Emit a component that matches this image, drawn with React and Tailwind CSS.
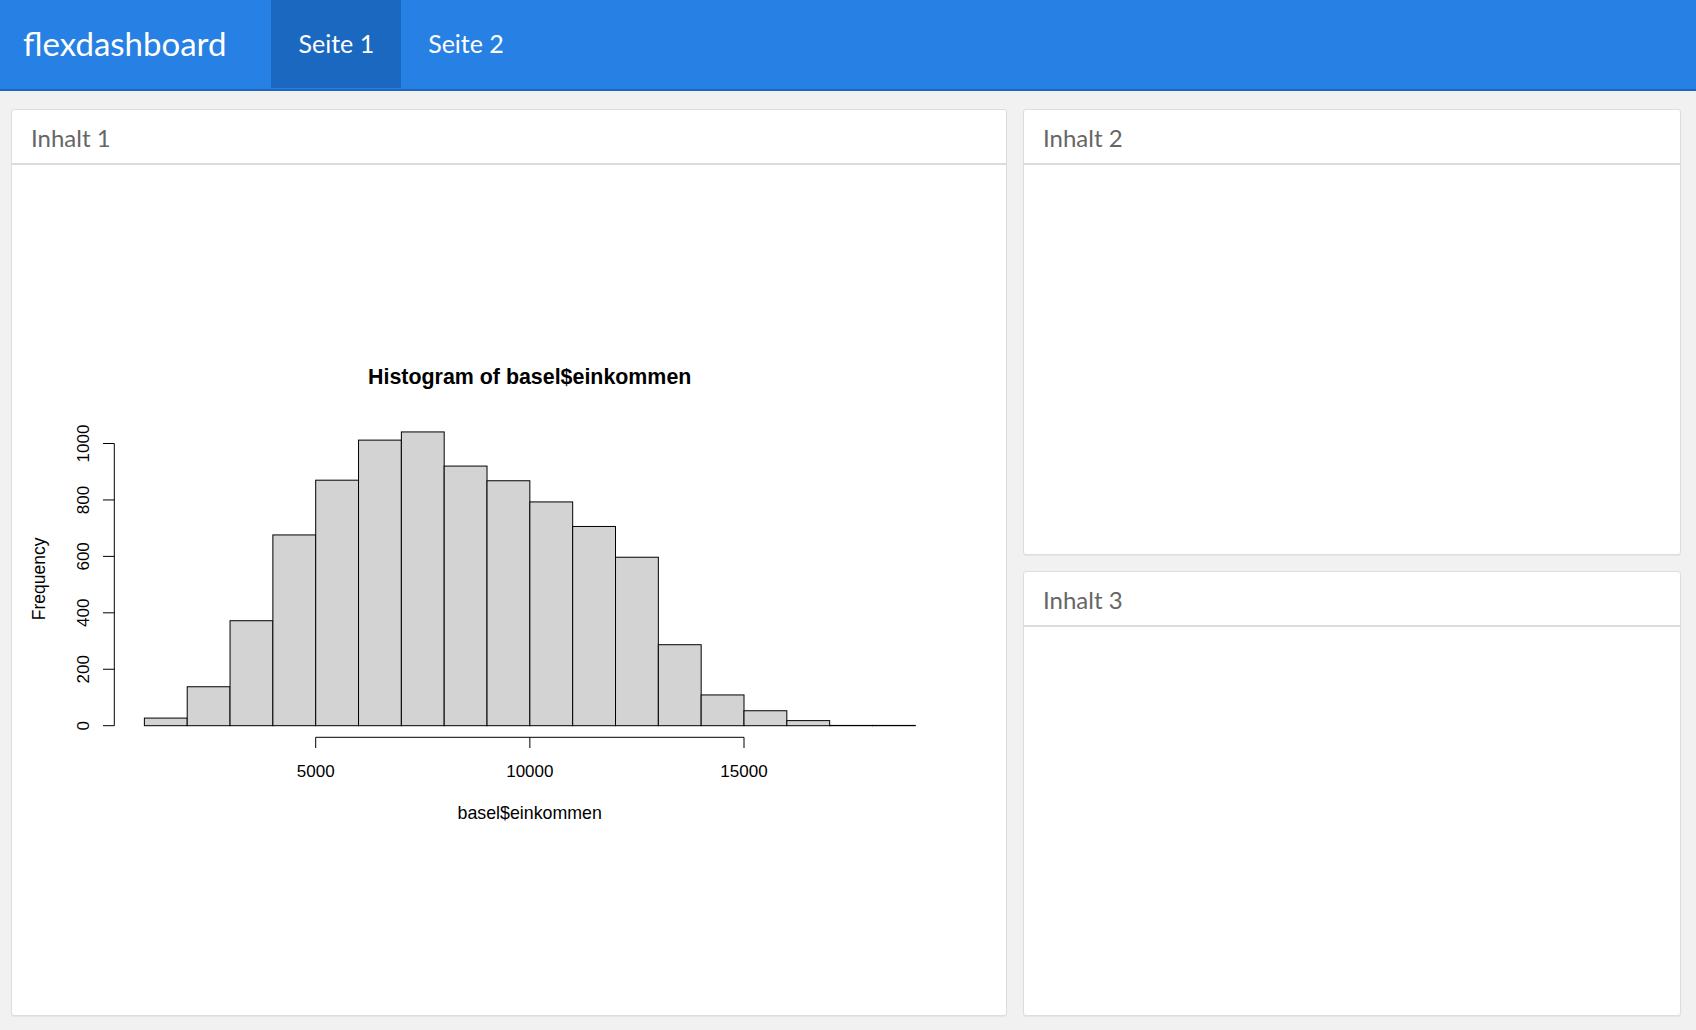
import React from "react";

const counts = [27, 138, 372, 676, 870, 1012, 1041, 920, 868, 793, 706, 597, 287, 109, 53, 18, 1, 1];

// plot coordinates in page pixels
const X = (v) => 101.55 + v * 0.04283;
const Y = (f) => 726.7 - f * 0.2822;

function Histogram() {
  const yTicks = [0, 200, 400, 600, 800, 1000];
  const xTicks = [5000, 10000, 15000];
  return (
    <svg width="994" height="849" className="block" style={{ fontFamily: '"Liberation Sans", Arial, sans-serif' }}>
      <g transform="translate(-12,-166)">
        <text x="529.7" y="385.4" textAnchor="middle" fontSize="21.4" fontWeight="bold" fill="#000">
          Histogram of basel$einkommen
        </text>

        {counts.map((c, i) => {
          const x0 = X(1000 + i * 1000);
          const x1 = X(2000 + i * 1000);
          return (
            <rect
              key={i}
              x={x0}
              y={Y(c)}
              width={x1 - x0}
              height={Y(0) - Y(c)}
              fill="#d3d3d3"
              stroke="#000"
              strokeWidth="1"
            />
          );
        })}

        {/* y axis */}
        <line x1="114.3" y1={Y(0)} x2="114.3" y2={Y(1000)} stroke="#000" strokeWidth="1" />
        {yTicks.map((t) => (
          <g key={t}>
            <line x1="103" y1={Y(t)} x2="114.3" y2={Y(t)} stroke="#000" strokeWidth="1" />
            <text
              transform={`translate(89.3,${Y(t)}) rotate(-90)`}
              textAnchor="middle"
              fontSize="17"
              fill="#000"
            >
              {t}
            </text>
          </g>
        ))}
        <text transform="translate(45,579.8) rotate(-90)" textAnchor="middle" fontSize="17.5" fill="#000">
          Frequency
        </text>

        {/* x axis */}
        <line x1={X(5000)} y1="738.3" x2={X(15000)} y2="738.3" stroke="#000" strokeWidth="1" />
        {xTicks.map((t) => (
          <g key={t}>
            <line x1={X(t)} y1="738.3" x2={X(t)} y2="749" stroke="#000" strokeWidth="1" />
            <text x={X(t)} y="777.7" textAnchor="middle" fontSize="17" fill="#000">
              {t}
            </text>
          </g>
        ))}
        <text x="529.7" y="820.3" textAnchor="middle" fontSize="17.8" fill="#000">
          basel$einkommen
        </text>
      </g>
    </svg>
  );
}

function Panel({ title, className, children }) {
  return (
    <div className={`flex flex-col bg-white border border-[#dddddd] rounded-[3px] shadow-[0_1px_1px_rgba(0,0,0,0.05)] overflow-hidden ${className}`}>
      <div className="h-[55px] shrink-0 flex items-center px-[19px] pt-[3px] border-b-2 border-[#dcdcdc] text-[24px] text-[#666666]">
        {title}
      </div>
      <div className="flex-1 min-h-0">{children}</div>
    </div>
  );
}

export default function App() {
  return (
    <div className="h-[1030px] w-[1696px] flex flex-col bg-[#f1f1f1] overflow-hidden" style={{ fontFamily: 'Lato, "Open Sans", sans-serif' }}>
      {/* navbar */}
      <div className="h-[91px] shrink-0 flex items-stretch bg-[#2780e3] border-b-2 border-[#1967be]">
        <div className="flex items-center pl-[23px] pr-[45px] pb-[2px] text-[33px] text-white">flexdashboard</div>
        <div className="flex items-center h-[88px] px-[27px] bg-[#1b68c0] text-[25px] text-white">Seite 1</div>
        <div className="flex items-center h-[88px] px-[27px] text-[25px] text-white">Seite 2</div>
      </div>

      {/* content */}
      <div className="flex-1 min-h-0 flex gap-4 pt-[18px] pb-[14px] pl-[11px] pr-[15px]">
        <Panel title="Inhalt 1" className="w-[996px] shrink-0">
          <Histogram />
        </Panel>
        <div className="w-[658px] shrink-0 flex flex-col gap-4">
          <Panel title="Inhalt 2" className="flex-1" />
          <Panel title="Inhalt 3" className="flex-1" />
        </div>
      </div>
    </div>
  );
}
